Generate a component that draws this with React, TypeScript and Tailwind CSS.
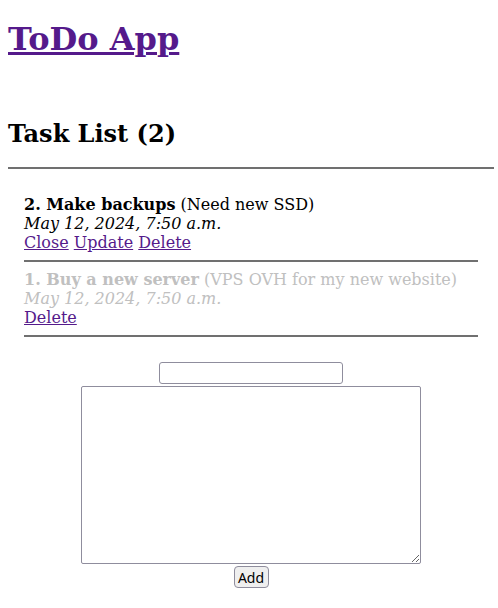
import React from 'react'

interface Task {
  id: number
  title: string
  description: string
  date: string
  done: boolean
}

const tasks: Task[] = [
  { id: 2, title: 'Make backups', description: 'Need new SSD', date: 'May 12, 2024, 7:50 a.m.', done: false },
  { id: 1, title: 'Buy a new server', description: 'VPS OVH for my new website', date: 'May 12, 2024, 7:50 a.m.', done: true },
]

function TaskItem({ task }: { task: Task }) {
  return (
    <li className="list-none">
      <div className={task.done ? 'text-[#c0c0c0]' : 'text-black'}>
        <div className="leading-[19px]">
          <b>
            {task.id}. {task.title}
          </b>{' '}
          ({task.description})
        </div>
        <div className="italic leading-[19px]">{task.date}</div>
      </div>
      <div className="leading-[19px] text-[#551a8b]">
        {!task.done && (
          <>
            <a href="#" className="underline">Close</a>{' '}
            <a href="#" className="underline">Update</a>{' '}
          </>
        )}
        <a href="#" className="underline">Delete</a>
      </div>
      <hr className="mt-[8px] mb-[8px] border-0 border-t-2 border-[#707070]" />
    </li>
  )
}

export default function App() {
  return (
    <div className="min-h-[608px] bg-white pl-2 font-['DejaVu_Serif',serif] text-[16px] text-black">
      <div className="w-[486px]">
        <h1 className="pt-[21px] text-[32px] font-bold leading-[37px]">
          <a href="#" className="text-[#551a8b] underline">ToDo App</a>
        </h1>
        <h2 className="mt-[62px] text-[24px] font-bold leading-[28px]">Task List ({tasks.length})</h2>
        <hr className="mt-[19px] border-0 border-t-2 border-[#707070]" />
        <ul className="mx-4 mt-[26px]">
          {tasks.map(t => (
            <TaskItem key={t.id} task={t} />
          ))}
        </ul>
        <form className="mt-[25px] flex flex-col items-center font-['Noto_Sans',Arial,sans-serif] text-[13.33px]">
          <input
            type="text"
            className="h-[22px] w-[184px] rounded-[3px] border border-[#8f8d9d] bg-white px-[2px]"
          />
          <textarea className="mt-[2px] h-[178px] w-[340px] rounded-[2px] border border-[#8f8d9d] bg-white" />
          <button
            type="button"
            className="mt-[2px] h-[22px] w-[35px] rounded-[4px] border border-[#8f8d9d] bg-[#efefef] p-0 text-[14px] leading-normal text-black"
          >
            Add
          </button>
        </form>
      </div>
    </div>
  )
}
